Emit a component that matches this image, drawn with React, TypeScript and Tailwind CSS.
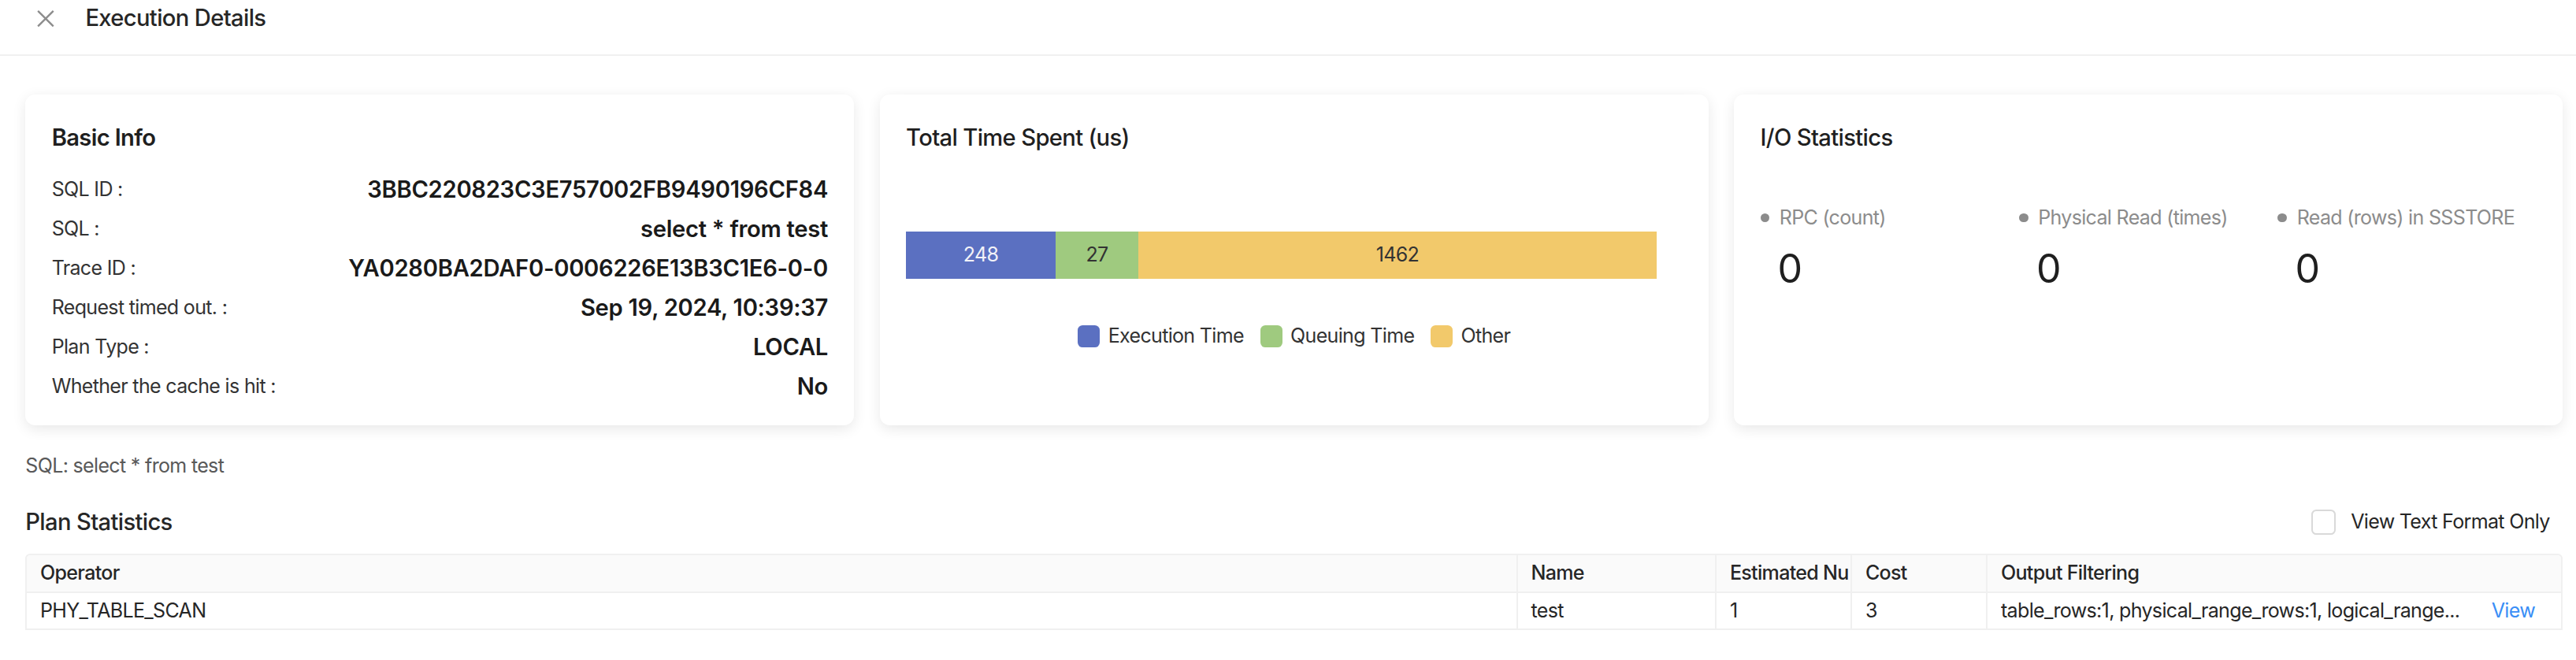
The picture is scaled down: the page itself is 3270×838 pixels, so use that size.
import React from "react";

const basicRows: [string, string][] = [
  ["SQL ID", "3BBC220823C3E757002FB9490196CF84"],
  ["SQL", "select * from test"],
  ["Trace ID", "YA0280BA2DAF0-0006226E13B3C1E6-0-0"],
  ["Request timed out.", "Sep 19, 2024, 10:39:37"],
  ["Plan Type", "LOCAL"],
  ["Whether the cache is hit", "No"],
];

const ioStats = [
  { label: "RPC (count)", value: "0" },
  { label: "Physical Read (times)", value: "0" },
  { label: "Read (rows) in SSSTORE", value: "0" },
];

const legend = [
  { label: "Execution Time", color: "bg-[#5b70c1]" },
  { label: "Queuing Time", color: "bg-[#9fca7f]" },
  { label: "Other", color: "bg-[#f2c96b]" },
];

function Card({ children }: { children: React.ReactNode }) {
  return (
    <div className="h-[201.5px] rounded-[6px] bg-white px-4 pt-[15.5px] shadow-[0_2px_8px_0_rgba(0,0,0,0.09)]">
      {children}
    </div>
  );
}

export default function App() {
  return (
    <div className="[zoom:2.0855] min-h-[402px] bg-white font-[Inter,sans-serif] tracking-[-0.02em] text-[#262626] antialiased">
      {/* Drawer header */}
      <div className="flex h-[34px] items-start border-b border-[#f0f0f0]">
        <svg
          className="ml-[22.5px] mt-[6.2px] h-[10.2px] w-[10.5px]"
          viewBox="0 0 10 10"
          fill="none"
        >
          <path d="M0.4 0.4 L9.6 9.6 M9.6 0.4 L0.4 9.6" stroke="#8c8c8c" strokeWidth="1.1" />
        </svg>
        <div className="ml-[19px] text-[14px] font-medium leading-[22px] text-[#262626]">
          Execution Details
        </div>
      </div>

      <div className="pl-[15.5px] pr-[8px]">
        {/* Summary cards */}
        <div className="mt-[23.5px] grid grid-cols-3 gap-[15.5px]">
          <Card>
            <div className="text-[14px] font-semibold leading-[22px] text-[#1f1f1f]">Basic Info</div>
            <div className="mt-[8.5px]">
              {basicRows.map(([label, value]) => (
                <div key={label} className="flex h-[24px] items-center justify-between">
                  <span className="text-[12px] text-[#333333]">
                    {label}
                    <span className="ml-[3px]">:</span>
                  </span>
                  <span className="text-[14px] font-semibold tracking-[-0.01em] text-[#1a1a1a]">{value}</span>
                </div>
              ))}
            </div>
          </Card>

          <Card>
            <div className="text-[14px] font-medium leading-[22px] text-[#1f1f1f]">
              Total Time Spent (us)
            </div>
            <div className="mt-[46px] flex h-[28.6px] text-[12px]">
              <div className="flex w-[91px] items-center justify-center bg-[#5b70c1] text-[#f2f2f8]">248</div>
              <div className="flex w-[50.4px] items-center justify-center bg-[#9fca7f] text-[#333333]">27</div>
              <div className="flex w-[315.4px] items-center justify-center bg-[#f2c96b] text-[#333333]">1462</div>
            </div>
            <div className="mt-[28px] flex items-center justify-center gap-[10px]">
              {legend.map((l) => (
                <div key={l.label} className="flex items-center">
                  <span className={`h-[13.4px] w-[13.4px] rounded-[3px] ${l.color}`} />
                  <span className="ml-[5px] text-[12px] leading-[14px] text-[#333333]">{l.label}</span>
                </div>
              ))}
            </div>
          </Card>

          <Card>
            <div className="text-[14px] font-medium leading-[22px] text-[#1f1f1f]">I/O Statistics</div>
            <div className="mt-[27.6px] grid grid-cols-3">
              {ioStats.map((s) => (
                <div key={s.label}>
                  <div className="flex h-[20px] items-center text-[12px] text-[#8c8c8c]">
                    <span className="h-[5.6px] w-[5.6px] rounded-full bg-[#8c8c8c]" />
                    <span className="ml-[6px] whitespace-nowrap">{s.label}</span>
                  </div>
                  <div className="mt-[5px] pl-[10.5px] text-[24px] leading-[32px] text-[#1f1f1f]">{s.value}</div>
                </div>
              ))}
            </div>
          </Card>
        </div>

        {/* SQL text */}
        <div className="mt-[14.8px] text-[12px] leading-[20px] text-[#595959]">SQL: select * from test</div>

        {/* Plan statistics header */}
        <div className="mt-[13.2px] flex h-[22px] items-center justify-between">
          <div className="text-[14px] font-medium leading-[22px] text-[#262626]">Plan Statistics</div>
          <label className="mr-[8px] flex items-center">
            <span className="h-[15px] w-[15px] rounded-[3px] border border-[#d9d9d9] bg-white" />
            <span className="ml-[9px] text-[12px] text-[#262626]">View Text Format Only</span>
          </label>
        </div>

        {/* Plan table */}
        <div className="mt-[8px] overflow-hidden rounded-t-[3px] border border-[#f0f0f0]">
          <table className="w-full table-fixed border-collapse text-[12px] leading-[14px]">
            <colgroup>
              <col className="w-[907px]" />
              <col className="w-[121px]" />
              <col className="w-[82.5px]" />
              <col className="w-[82.5px]" />
              <col />
            </colgroup>
            <thead>
              <tr className="bg-[#fafafa]">
                <th className="overflow-hidden whitespace-nowrap border-b border-[#f0f0f0] px-2 py-1 text-left font-medium">Operator</th>
                <th className="overflow-hidden whitespace-nowrap border-b border-l border-[#f0f0f0] px-2 py-1 text-left font-medium">Name</th>
                <th className="overflow-hidden whitespace-nowrap border-b border-l border-[#f0f0f0] py-1 pl-2 pr-0 text-left font-medium">Estimated Nu</th>
                <th className="overflow-hidden whitespace-nowrap border-b border-l border-[#f0f0f0] px-2 py-1 text-left font-medium">Cost</th>
                <th className="overflow-hidden whitespace-nowrap border-b border-l border-[#f0f0f0] px-2 py-1 text-left font-medium">Output Filtering</th>
              </tr>
            </thead>
            <tbody>
              <tr>
                <td className="px-2 py-1">PHY_TABLE_SCAN</td>
                <td className="border-l border-[#f0f0f0] px-2 py-1">test</td>
                <td className="border-l border-[#f0f0f0] px-2 py-1">1</td>
                <td className="border-l border-[#f0f0f0] px-2 py-1">3</td>
                <td className="border-l border-[#f0f0f0] px-2 py-1">
                  <div className="flex items-center">
                    <span className="min-w-0 flex-1 truncate">
                      table_rows:1, physical_range_rows:1, logical_range...
                    </span>
                    <a className="ml-3 mr-2 shrink-0 cursor-pointer text-[#3a8ef6]">View</a>
                  </div>
                </td>
              </tr>
            </tbody>
          </table>
        </div>
      </div>
    </div>
  );
}
